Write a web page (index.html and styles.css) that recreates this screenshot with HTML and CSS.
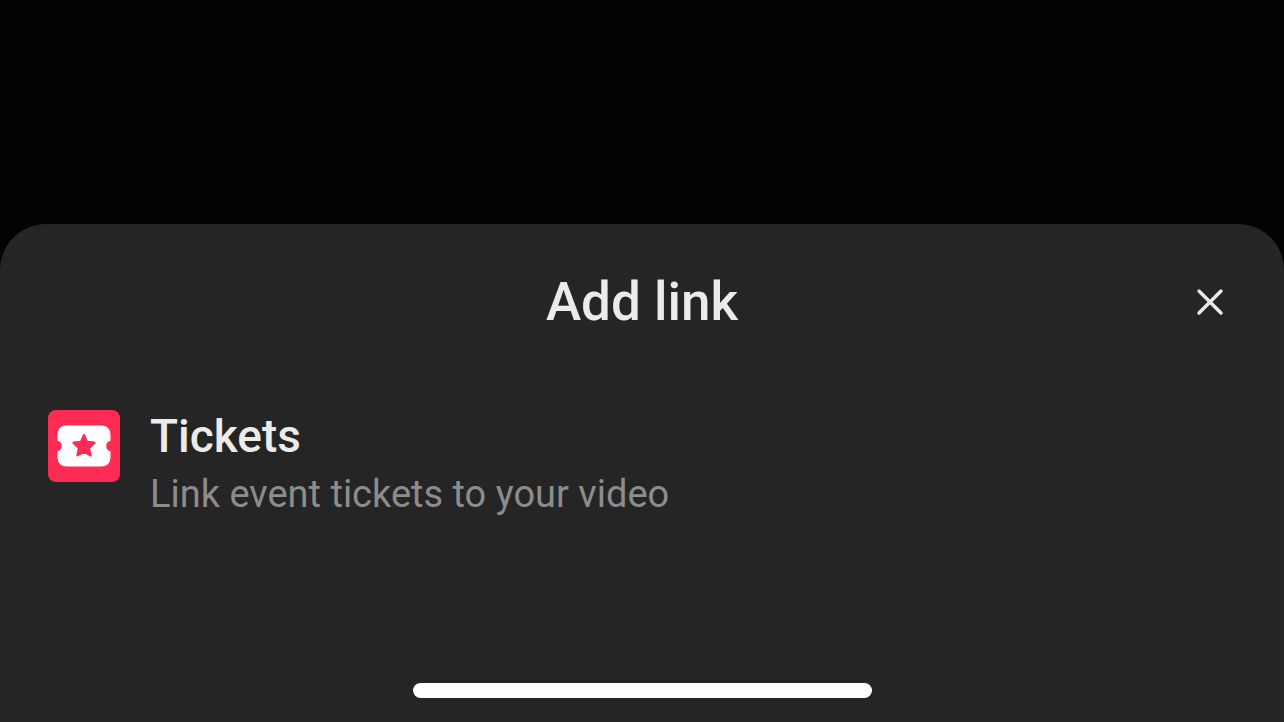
FILE: index.html
```html
<!DOCTYPE html>
<html lang="en">
<head>
    <meta charset="UTF-8">
    <meta name="viewport" content="width=device-width, initial-scale=1.0">
    <title>Add link</title>
    <link rel="stylesheet" href="styles.css">
</head>
<body>

<main class="sheet">
    <header class="sheet-header">
        <h1>Add link</h1>
        <button type="button" class="close-button" aria-label="Close">
            <svg width="28" height="28" viewBox="0 0 28 28" fill="none" stroke="currentColor" stroke-width="3.4" stroke-linecap="round">
                <path d="M3 3 25 25M25 3 3 25"/>
            </svg>
        </button>
    </header>

    <button type="button" class="link-option">
        <svg class="option-icon" width="72" height="72" viewBox="0 0 72 72">
            <rect width="72" height="72" rx="8" fill="#fe2c55"/>
            <path fill="#fff" d="M19 15.5H53Q62.5 15.5 62.5 25V30.8A5.3 5.3 0 0 0 62.5 41.200V47Q62.5 56.5 53 56.5H19Q9.5 56.5 9.5 47V41.200A5.3 5.3 0 0 0 9.5 30.8V25Q9.5 15.5 19 15.5Z"/>
            <path fill="#fe2c55" stroke="#fe2c55" stroke-width="2.4" stroke-linejoin="round" d="M36 25.2 39 32 46.400 32.800 40.900 37.800 42.500 45.300 36 41.800 29.500 45.300 31.100 37.800 25.600 32.800 33 32Z"/>
        </svg>
        <span class="option-text">
            <span class="option-title">Tickets</span>
            <span class="option-description">Link event tickets to your video</span>
        </span>
    </button>

    <div class="home-indicator"></div>
</main>

</body>
</html>
```
FILE: styles.css
```css
* {
    box-sizing: border-box;
}
body {
    font-family: Roboto, "Noto Sans", sans-serif;
    background-color: #030303;
    color: #ebebeb;
    margin: 0;
    display: flex;
    flex-direction: column;
    justify-content: flex-end;
    min-height: 100vh;
}
button {
    font: inherit;
    color: inherit;
    background: none;
    border: none;
    padding: 0;
    cursor: pointer;
}
svg {
    display: block;
}
.sheet {
    display: flex;
    flex-direction: column;
    background-color: #252525;
    border-radius: 46px 46px 0 0;
    padding: 42px 48px 24px;
}
.sheet-header {
    display: grid;
    grid-template-columns: 1fr auto 1fr;
    align-items: center;
    margin-bottom: 72px;
}
.sheet-header h1 {
    grid-column: 2;
    font-size: 53px;
    font-weight: 500;
    line-height: 72px;
    margin: 0;
}
.close-button {
    justify-self: end;
    padding: 12px;
}
.link-option {
    display: flex;
    align-items: flex-start;
    gap: 30px;
    text-align: left;
}
.option-text {
    display: flex;
    flex-direction: column;
    gap: 6px;
}
.option-title {
    font-size: 46px;
    font-weight: 500;
    line-height: 52px;
}
.option-description {
    color: #8c8c8c;
    font-size: 38px;
    line-height: 52px;
}
.home-indicator {
    align-self: center;
    width: 459px;
    max-width: 60%;
    height: 15px;
    margin-top: 163px;
    border-radius: 8px;
    background-color: #fff;
}
```
